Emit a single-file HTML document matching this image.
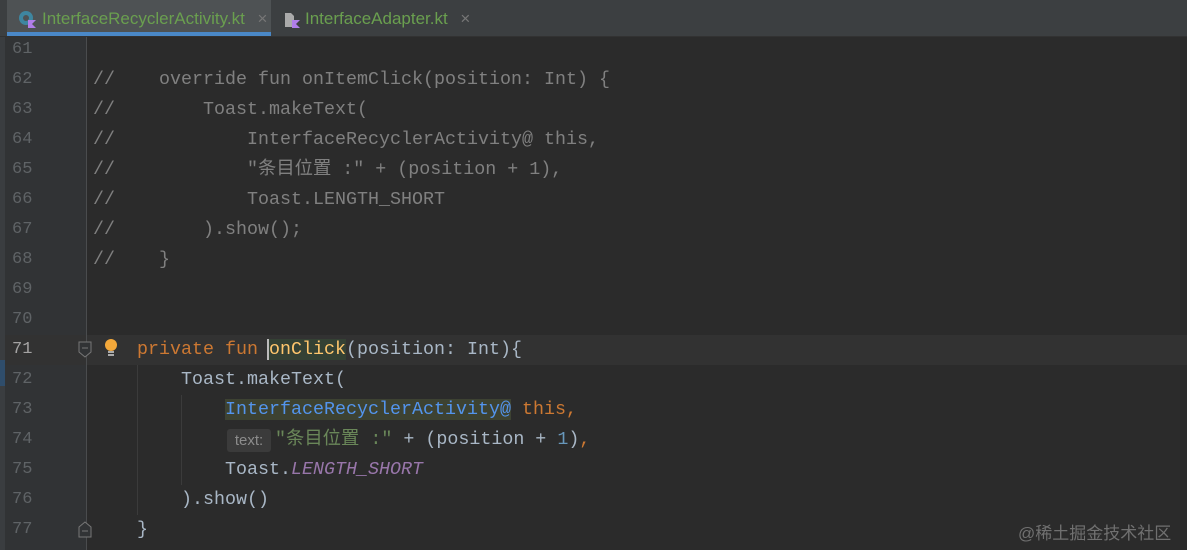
<!DOCTYPE html>
<html><head><meta charset="utf-8"><style>
body{margin:0;width:1187px;height:550px;overflow:hidden;background:#2b2b2b;position:relative;font-family:"Liberation Mono",monospace;}
.tabs{position:absolute;left:0;top:0;width:1187px;height:36px;background:#3c3f41;border-bottom:1px solid #323232;font-family:"Liberation Sans",sans-serif;font-size:17px;}
.tab{position:absolute;top:0;height:36px;line-height:38px;color:#6a9f4f;}
.strip{position:absolute;left:0;top:37px;width:5px;height:513px;background:#3a3d40;}
.gutter{position:absolute;left:5px;top:37px;width:81px;height:513px;background:#313335;}
.sep{position:absolute;left:86px;top:37px;width:1px;height:513px;background:#4a4c4e;}
.ln{position:absolute;left:12px;width:40px;font-size:17px;color:#5f6366;height:30px;line-height:30px;}
.code{position:absolute;left:93px;font-size:18.33px;white-space:pre;height:30px;line-height:30px;color:#a9b7c6;}
.c{color:#808080}.k{color:#cc7832}.f{color:#ffc66d}.s{color:#6a8759}.n{color:#6897bb}.p{color:#9876aa;font-style:italic}.cls{color:#5394ec}
.guide{position:absolute;width:1px;background:#3b3b3b;}
.cjk{font-family:'Liberation Mono','Noto Sans CJK SC',monospace}
</style></head><body>
<div class="tabs">
 <div style="position:absolute;left:7px;top:0;width:264px;height:36px;background:#4e5254"></div>
 <div style="position:absolute;left:7px;top:32px;width:264px;height:4px;background:#4a88c7"></div>
 <svg style="position:absolute;left:18px;top:10px" width="20" height="18"><circle cx="8" cy="8" r="7" fill="#3e86a0"/><circle cx="8" cy="8" r="3" fill="#4e5254"/><path d="M10 10h8l-4 4 4 4h-8z" fill="#b07ee8"/></svg>
 <div class="tab" style="left:42px">InterfaceRecyclerActivity.kt <span style="color:#777;margin-left:8px">×</span></div>
 <svg style="position:absolute;left:283px;top:10px" width="20" height="18"><path d="M2 3h6l3 3v11H2z" fill="#aaa"/><path d="M9 10h8l-4 4 4 4H9z" fill="#b07ee8"/></svg>
 <div class="tab" style="left:305px">InterfaceAdapter.kt <span style="color:#777;margin-left:8px">×</span></div>
</div>
<div class="strip"></div>
<div style="position:absolute;left:0;top:360px;width:5px;height:26px;background:#2f4d6b"></div>
<div class="gutter"></div>
<div style="position:absolute;left:5px;top:335px;width:1182px;height:30px;background:#323232"></div>
<div class="sep"></div>
<div class="guide" style="left:137px;top:365px;height:150px"></div>
<div class="guide" style="left:181px;top:395px;height:90px"></div>
<svg style="position:absolute;left:78px;top:341px" width="14" height="18"><path d="M1 1h12v10l-6 5-6-5z" fill="#313335" stroke="#777"/><path d="M4 7h6" stroke="#777"/></svg>
<svg style="position:absolute;left:78px;top:520px" width="14" height="18"><path d="M1 17h12V7L7 2 1 7z" fill="#313335" stroke="#777"/><path d="M4 11h6" stroke="#777"/></svg>
<svg style="position:absolute;left:103px;top:338px" width="16" height="20"><circle cx="8" cy="7" r="6" fill="#f3a83a"/><rect x="5" y="13" width="6" height="2" fill="#aaa"/><rect x="5" y="16" width="6" height="2" fill="#aaa"/></svg>

<div class="ln" style="top:35px">61</div>
<div class="ln" style="top:65px">62</div>
<div class="ln" style="top:95px">63</div>
<div class="ln" style="top:125px">64</div>
<div class="ln" style="top:155px">65</div>
<div class="ln" style="top:185px">66</div>
<div class="ln" style="top:215px">67</div>
<div class="ln" style="top:245px">68</div>
<div class="ln" style="top:275px">69</div>
<div class="ln" style="top:305px">70</div>
<div class="ln" style="top:335px;color:#a4a3a3">71</div>
<div class="ln" style="top:365px">72</div>
<div class="ln" style="top:395px">73</div>
<div class="ln" style="top:425px">74</div>
<div class="ln" style="top:455px">75</div>
<div class="ln" style="top:485px">76</div>
<div class="ln" style="top:515px">77</div>

<div class="code c" style="top:65px">//    override fun onItemClick(position: Int) {</div>
<div class="code c" style="top:95px">//        Toast.makeText(</div>
<div class="code c" style="top:125px">//            InterfaceRecyclerActivity@ this,</div>
<div class="code c" style="top:155px">//            "<span class="cjk">条目位置</span> :" + (position + 1),</div>
<div class="code c" style="top:185px">//            Toast.LENGTH_SHORT</div>
<div class="code c" style="top:215px">//        ).show();</div>
<div class="code c" style="top:245px">//    }</div>
<div class="code" style="top:335px">    <span class="k">private fun </span><span class="f" style="background:#344134;border-left:2px solid #bbb;margin-left:-2px">onClick</span>(position: Int){</div>
<div class="code" style="top:365px">        Toast.makeText(</div>
<div class="code" style="top:395px">            <span class="cls" style="background:#3d4232">InterfaceRecyclerActivity@</span> <span class="k">this,</span></div>
<div style="position:absolute;left:227px;top:429px;width:44px;height:23px;background:#3b3b3b;border-radius:3px;font-family:'Liberation Sans',sans-serif;font-size:15px;color:#8c8c8c;line-height:23px;text-align:center">text:</div>
<div class="code" style="top:425px;left:275px"><span class="s">"<span class="cjk">条目位置</span> :"</span> + (position + <span class="n">1</span>)<span class="k">,</span></div>
<div class="code" style="top:455px">            Toast.<span class="p">LENGTH_SHORT</span></div>
<div class="code" style="top:485px">        ).show()</div>
<div class="code" style="top:515px">    }</div>
<div style="position:absolute;left:1018px;top:519px;font-family:'Liberation Sans','Noto Sans CJK SC',sans-serif;font-size:17px;color:#707070">@稀土掘金技术社区</div>
</body></html>
